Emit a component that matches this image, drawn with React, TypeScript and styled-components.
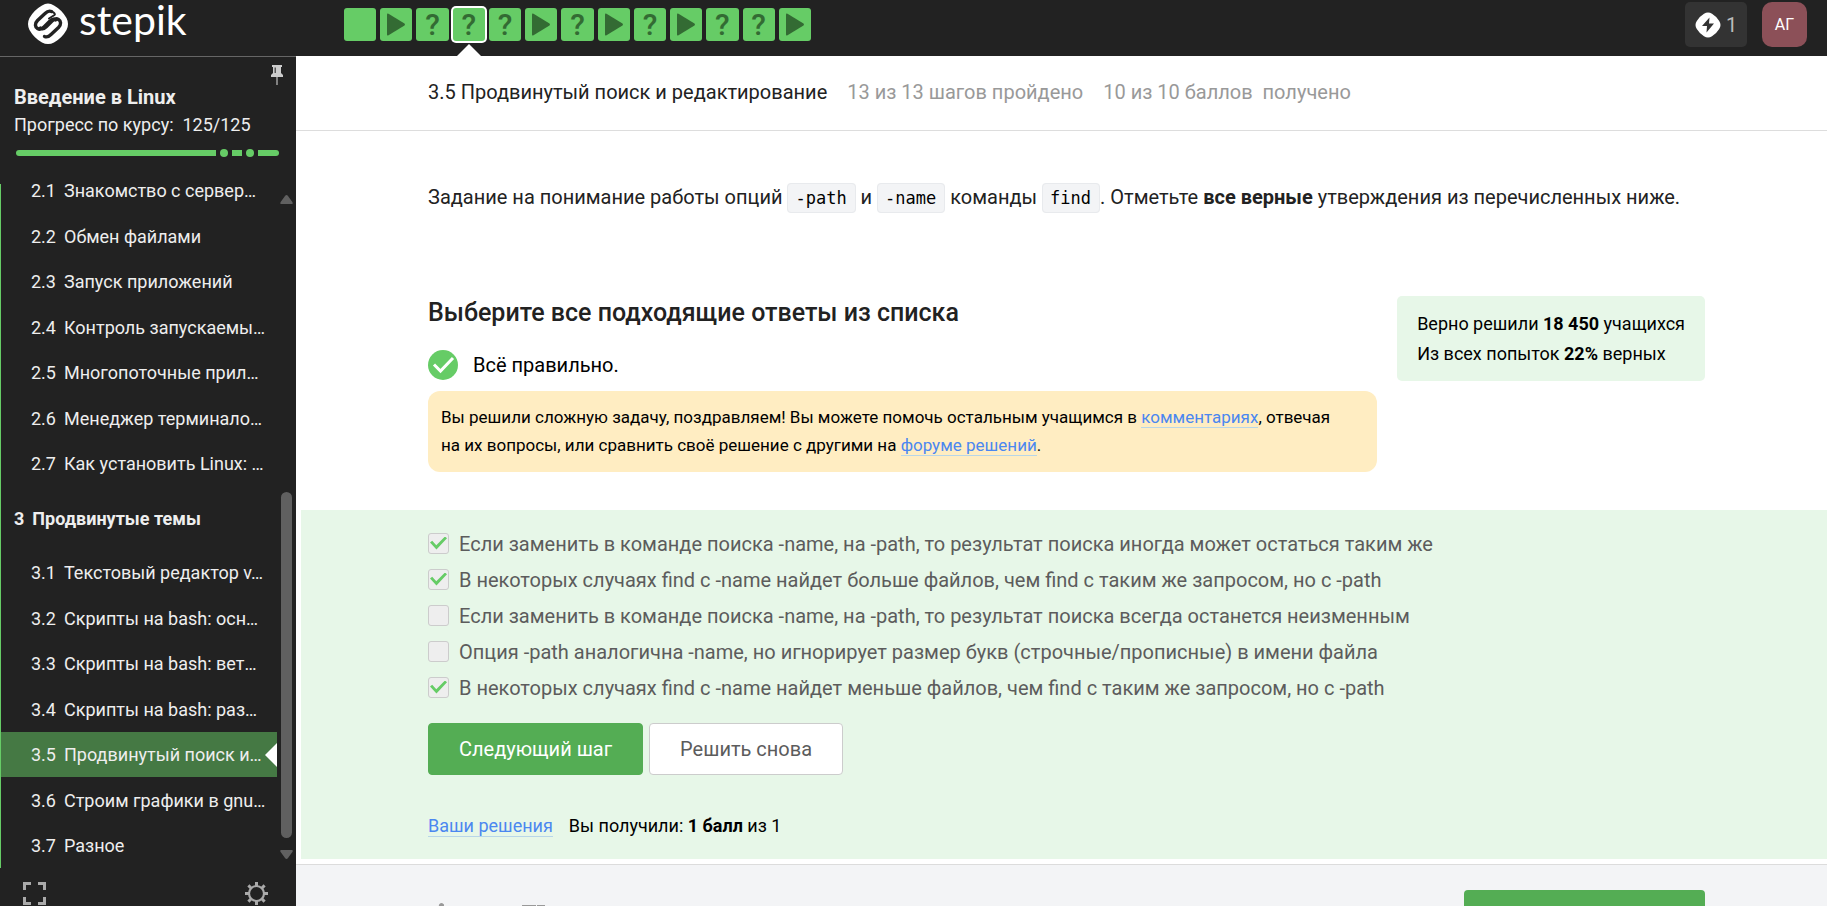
import React from "react";
import styled, { createGlobalStyle, css } from "styled-components";

const GlobalStyle = createGlobalStyle`
  *, *::before, *::after { box-sizing: border-box; }
  body { margin: 0; background: #fff; color: #222; font-family: Roboto, "Liberation Sans", sans-serif; }
  a { color: inherit; text-decoration: none; }
  button { font-family: inherit; cursor: pointer; }
  ul, ol { margin: 0; padding: 0; list-style: none; }
  h1, h2, h3, p { margin: 0; }
`;

const Page = styled.div`
  height: 100vh;
  overflow: hidden;
  display: flex;
  flex-direction: column;
`;

/* ---------- top bar ---------- */

const TopBar = styled.header`
  flex: none;
  height: 56px;
  display: flex;
  background: #222;
`;

const LogoArea = styled.div`
  width: 344px;
  flex: none;
  padding-left: 27px;
`;

const LogoLink = styled.a`
  display: inline-flex;
  align-items: flex-start;
  gap: 10px;
  color: #fff;
  svg { margin-top: 3px; }
`;

const Wordmark = styled.span`
  font-family: Lato, "Liberation Sans", sans-serif;
  font-size: 41px;
  line-height: 40px;
`;

const Steps = styled.nav`
  flex: none;
  width: 467px;
  height: 33px;
  margin-top: 8px;
  display: grid;
  grid-template-columns: repeat(13, 1fr);
  gap: 4px;
`;

const Step = styled.a<{ $active?: boolean }>`
  position: relative;
  display: flex;
  align-items: center;
  justify-content: center;
  border-radius: 3px;
  background: #66cc66;
  color: #336b33;
  font-size: 30px;
  line-height: 33px;
  font-weight: 500;
  ${(p) =>
    p.$active &&
    css`
      box-shadow: 0 0 0 2px #fff;
      &::after {
        content: "";
        position: absolute;
        top: 36px;
        left: 50%;
        margin-left: -12px;
        border: 12px solid transparent;
        border-top: 0;
        border-bottom-color: #fff;
      }
    `}
`;

const UserArea = styled.div`
  margin-left: auto;
  padding: 2px 20px 0 0;
  display: flex;
  align-items: flex-start;
  gap: 15px;
`;

const Streak = styled.button`
  height: 45px;
  width: 62px;
  padding: 0 10px;
  display: flex;
  align-items: center;
  gap: 5px;
  border: 0;
  border-radius: 5px;
  background: #333;
  color: #bbb;
  font-size: 20px;
  svg { flex: none; }
`;

const Avatar = styled.button`
  width: 45px;
  height: 45px;
  padding: 0;
  border: 0;
  border-radius: 10px;
  background: #8c5058;
  color: #fff;
  font-size: 16px;
`;

/* ---------- sidebar ---------- */

const Body = styled.div`
  flex: 1;
  min-height: 0;
  display: flex;
`;

const Sidebar = styled.aside`
  flex: none;
  width: 296px;
  display: flex;
  flex-direction: column;
  border-top: 1px solid #666;
  background: #222;
  color: #eee;
`;

const CourseHead = styled.div`
  flex: none;
  height: 127px;
  padding: 8px 13px 0 14px;
`;

const PinButton = styled.button`
  display: block;
  margin: 0 0 0 auto;
  padding: 0;
  width: 12px;
  height: 18px;
  border: 0;
  background: none;
`;

const CourseTitle = styled.h2`
  font-size: 20px;
  line-height: 28px;
  font-weight: 700;
`;

const CourseProgress = styled.p`
  font-size: 18px;
  line-height: 28px;
  white-space: pre;
`;

const ProgressTrack = styled.div`
  margin: 10px 4px 0 2px;
  height: 8px;
  display: flex;
  align-items: center;
  gap: 4px;
`;

const Segment = styled.span<{ $width?: number; $edge?: "left" | "right" }>`
  height: 6px;
  background: #66cc66;
  ${(p) => (p.$width ? `flex: none; width: ${p.$width}px;` : "flex: 1;")}
  ${(p) => p.$edge === "left" && "border-radius: 3px 0 0 3px;"}
  ${(p) => p.$edge === "right" && "border-radius: 0 3px 3px 0;"}
`;

const Exam = styled.span`
  flex: none;
  width: 8px;
  height: 8px;
  border-radius: 50%;
  background: #66cc66;
`;

const LessonArea = styled.div`
  flex: 1;
  min-height: 0;
  display: flex;
  gap: 3px;
`;

const LessonScroll = styled.nav`
  width: 277px;
  overflow: hidden;
  display: flex;
  flex-direction: column;
  justify-content: flex-end;
  border-left: 1px solid #66cc66;
`;

const LessonList = styled.ul`
  flex: none;
`;

const Lesson = styled.li<{ $active?: boolean }>`
  position: relative;
  height: 46px;
  &:nth-child(odd) { height: 45px; }
  a {
    height: 100%;
    padding-left: 30px;
    display: flex;
    align-items: center;
    gap: 8px;
    font-size: 18px;
    white-space: nowrap;
  }
  ${(p) =>
    p.$active &&
    css`
      background: #457944;
      &::after {
        content: "";
        position: absolute;
        right: 0;
        top: 11px;
        border: 12px solid transparent;
        border-left: 0;
        border-right-color: #fff;
      }
    `}
`;

const LessonNumber = styled.span`
  flex: none;
  width: 25px;
`;

const SectionTitle = styled.h3`
  flex: none;
  height: 64px;
  padding-left: 13px;
  display: flex;
  align-items: center;
  gap: 8px;
  font-size: 18px;
  font-weight: 700;
`;

const ScrollRail = styled.div`
  width: 13px;
  padding: 11px 0 9px;
  display: flex;
  flex-direction: column;
  align-items: center;
  svg { flex: none; display: block; }
`;

const ScrollThumb = styled.div`
  width: 11px;
  height: 346px;
  margin: auto 0 12px;
  border-radius: 6px;
  background: #606060;
`;

const SideFooter = styled.div`
  flex: none;
  height: 38px;
  padding: 14px 28px 0 23px;
  display: flex;
  justify-content: space-between;
`;

const IconButton = styled.button`
  width: 23px;
  height: 23px;
  padding: 0;
  border: 0;
  background: none;
  svg { display: block; }
`;

/* ---------- main column ---------- */

const Main = styled.main`
  flex: 1;
  min-width: 0;
  overflow: hidden;
`;

const LessonHeader = styled.div`
  height: 75px;
  padding: 0 122px 2px 132px;
  display: flex;
  align-items: center;
  gap: 20px;
  border-bottom: 1px solid #ddd;
  font-size: 20px;
  color: #999;
  white-space: pre;
`;

const LessonTitle = styled.h1`
  font-size: 20px;
  font-weight: 400;
  color: #222;
`;

const TaskText = styled.p`
  padding: 50px 122px 0 132px;
  font-size: 20px;
  line-height: 32px;
`;

const Code = styled.code`
  padding: 4px 8px 4px 7px;
  border: 1px solid #e8eaed;
  border-radius: 4px;
  background: #f3f4f6;
  color: #000;
  font-family: "DejaVu Sans Mono", monospace;
  font-size: 17px;
`;

const Quiz = styled.section`
  padding: 82px 122px 38px 132px;
  display: flex;
  align-items: flex-start;
  gap: 20px;
`;

const QuizMain = styled.div`
  flex: 1;
  min-width: 0;
`;

const QuizTitle = styled.h2`
  font-size: 25px;
  line-height: 34px;
  font-weight: 500;
`;

const Verdict = styled.div`
  padding: 20px 0 11px;
  display: flex;
  align-items: center;
  gap: 15px;
  color: #000;
  font-size: 20px;
  line-height: 30px;
`;

const Praise = styled.p`
  padding: 12px 30px 13px 13px;
  border-radius: 12px;
  background: #ffedc2;
  color: #000;
  font-size: 17px;
  line-height: 28px;
`;

const Link = styled.a`
  color: #4b87f0;
  border-bottom: 1px solid #b8d6e8;
`;

const Stats = styled.aside`
  flex: none;
  padding: 13px 20px 12px;
  border-radius: 5px;
  background: #e7f7e8;
  color: #000;
  font-size: 18px;
  line-height: 30px;
`;

const Answers = styled.form`
  margin: 0 0 5px 5px;
  padding: 16px 122px 22px 127px;
  background: #e7f7e8;
`;

const Choice = styled.label`
  display: flex;
  align-items: center;
  gap: 10px;
  height: 36px;
  color: #5c5c5c;
  font-size: 20px;
`;

const Tick = styled.input`
  appearance: none;
  flex: none;
  width: 21px;
  height: 21px;
  margin: 0 0 2px;
  border: 1px solid #ccc;
  border-radius: 3px;
  background: #eee;
  &:checked::before {
    content: "";
    display: block;
    width: 17px;
    height: 13px;
    margin: 3px 0 0 1px;
    background: #66cc66;
    clip-path: polygon(0 46%, 13% 33%, 37% 68%, 88% 0, 100% 14%, 38% 100%);
  }
`;

const Actions = styled.div`
  margin-top: 17px;
  display: flex;
  gap: 6px;
`;

const Button = styled.button<{ $primary?: boolean }>`
  height: 52px;
  padding: 0 30px;
  border: 1px solid ${(p) => (p.$primary ? "#54ad54" : "#ccc")};
  border-radius: 4px;
  background: ${(p) => (p.$primary ? "#54ad54" : "#fff")};
  color: ${(p) => (p.$primary ? "#fff" : "#5c5c5c")};
  font-size: 20px;
`;

const ResultLine = styled.div`
  margin-top: 40px;
  display: flex;
  gap: 16px;
  color: #000;
  font-size: 18px;
  line-height: 21px;
`;

const StepFooter = styled.footer`
  height: 100px;
  padding: 25px 122px 0 132px;
  display: flex;
  align-items: flex-start;
  border-top: 1px solid #dcdcdc;
  background: #f3f4f6;
`;

const Vote = styled.button`
  width: 30px;
  height: 30px;
  margin: 12px 62px 0 0;
  padding: 0;
  border: 0;
  background: none;
  svg { display: block; }
`;

const FooterNext = styled.button`
  width: 241px;
  height: 52px;
  margin-left: auto;
  border: 0;
  border-radius: 4px;
  background: #54ad54;
`;

/* ---------- data ---------- */

const steps = ["text", "video", "quiz", "quiz", "quiz", "video", "quiz", "video", "quiz", "video", "quiz", "quiz", "video"];
const ACTIVE_STEP = 3;

const sectionTwo = [
  ["2.1", "Знакомство с сервер…"],
  ["2.2", "Обмен файлами"],
  ["2.3", "Запуск приложений"],
  ["2.4", "Контроль запускаемы…"],
  ["2.5", "Многопоточные прил…"],
  ["2.6", "Менеджер терминало…"],
  ["2.7", "Как установить Linux: …"],
];

const sectionThree = [
  ["3.1", "Текстовый редактор v…"],
  ["3.2", "Скрипты на bash: осн…"],
  ["3.3", "Скрипты на bash: вет…"],
  ["3.4", "Скрипты на bash: раз…"],
  ["3.5", "Продвинутый поиск и…"],
  ["3.6", "Строим графики в gnu…"],
  ["3.7", "Разное"],
];

const choices = [
  { text: "Если заменить в команде поиска -name, на -path, то результат поиска иногда может остаться таким же", on: true },
  { text: "В некоторых случаях find с -name найдет больше файлов, чем find с таким же запросом, но с -path", on: true },
  { text: "Если заменить в команде поиска -name, на -path, то результат поиска всегда останется неизменным", on: false },
  { text: "Опция -path аналогична -name, но игнорирует размер букв (строчные/прописные) в имени файла", on: false },
  { text: "В некоторых случаях find с -name найдет меньше файлов, чем find с таким же запросом, но с -path", on: true },
];

/* ---------- drawings ---------- */

const LogoMark = () => (
  <svg width="42" height="42" viewBox="0 0 42 42" aria-hidden="true">
    <path d="M15 2.5Q21-1.5 27 2.5Q35 7 39.500 15Q42.500 21 39.500 27Q35 35 27 39.500Q21 42.500 15 39.500Q7 35 2.500 27Q-.5 21 2.500 15Q7 7 15 2.500Z" fill="#fff" />
    <g fill="none" stroke="#222" strokeWidth="3.400" strokeLinecap="round" strokeLinejoin="round">
      <path d="M24.500 8.500C22 7.500 20 8.500 18 10.500L10.500 17.500C7.500 20.500 8 24 10.500 25.500C13 27 15 26 17 24L22.500 18.500C24.500 16.500 26.500 15.500 28.500 17" />
      <path d="M17.500 33.500C20 34.500 22 33.500 24 31.500L31.500 24.500C34.500 21.500 34 18 31.500 16.500C29 15 27 16 25 18L19.500 23.500C17.500 25.500 15.500 26.500 13.500 25" />
      <path d="M24.500 8.500Q29 10.500 27.500 12L22 15.500" strokeWidth="2" />
    </g>
  </svg>
);

const Play = () => (
  <svg width="20" height="23" viewBox="0 0 20 23" aria-hidden="true">
    <path d="M1 1.500Q1 0 2.500 .8L18.500 10.500Q19.500 11.500 18.500 12.500L2.500 22.200Q1 23 1 21.500Z" fill="#336b33" />
  </svg>
);

const Bolt = () => (
  <svg width="26" height="26" viewBox="0 0 26 26" aria-hidden="true">
    <path d="M9 1.800Q13-.8 17 1.800Q21.500 4.500 24.200 9Q26.800 13 24.200 17Q21.500 21.500 17 24.200Q13 26.800 9 24.200Q4.500 21.500 1.800 17Q-.8 13 1.800 9Q4.500 4.500 9 1.800Z" fill="#fff" />
    <path d="M14.500 5.500L7 14H12L11.500 20.500L19 11.500H14Z" fill="#333" />
  </svg>
);

const Pin = () => (
  <svg width="12" height="20" viewBox="0 0 12 20" aria-hidden="true" overflow="visible">
    <path d="M1 0H11V2H10V8L12 10V12H0V10L2 8V2H1Z" fill="#ccc" />
    <path d="M3.500 2.500H5V8H3.500Z" fill="#555" />
    <path d="M5.300 12H6.700V20H5.300Z" fill="#aaa" />
  </svg>
);

const Gear = () => (
  <svg width="23" height="23" viewBox="0 0 23 23" aria-hidden="true" stroke="#aaa" fill="none">
    <circle cx="11.500" cy="11.500" r="7.500" strokeWidth="2.200" />
    <path d="M11.500 0V4M11.500 19V23M0 11.500H4M19 11.500H23M3.400 3.400L6.200 6.200M16.800 16.800L19.600 19.600M3.400 19.600L6.200 16.800M16.800 6.200L19.600 3.400" strokeWidth="3" />
  </svg>
);

const Fullscreen = () => (
  <svg width="23" height="23" viewBox="0 0 23 23" aria-hidden="true">
    <path d="M1.500 8V1.500H8M15 1.500H21.500V8M21.500 15V21.500H15M8 21.500H1.500V15" fill="none" stroke="#aaa" strokeWidth="3" />
  </svg>
);

const Approved = () => (
  <svg width="30" height="30" viewBox="0 0 30 30" aria-hidden="true">
    <circle cx="15" cy="15" r="15" fill="#66cc66" />
    <path d="M6 14.500L12.500 21L25 8" fill="none" stroke="#fff" strokeWidth="3" />
  </svg>
);

const RailArrow = ({ down }: { down?: boolean }) => (
  <svg width="13" height="9" viewBox="0 0 13 9" aria-hidden="true">
    <path d={down ? "M1 0H12Q13.500 .5 12 2.500L8 8Q6.500 10 5 8L1 2.500Q-.5 .5 1 0Z" : "M1 9H12Q13.500 8.500 12 6.500L8 1Q6.500-1 5 1L1 6.500Q-.5 8.500 1 9Z"} fill="#606060" />
  </svg>
);

const Thumb = ({ down }: { down?: boolean }) => (
  <svg width="30" height="30" viewBox="0 0 30 30" aria-hidden="true" fill={down ? "none" : "#999"} stroke="#999" strokeWidth="2">
    {down ? <path d="M3 4H15V20L9 28V20H1ZM18 4H24V18H18Z" /> : <path d="M12 3Q13 1 15 3V12H26L24 26H10V12Z" />}
  </svg>
);

const Lessons = ({ items }: { items: string[][] }) => (
  <LessonList>
    {items.map(([number, title]) => (
      <Lesson key={number} $active={number === "3.5"}>
        <a href="#lesson">
          <LessonNumber>{number}</LessonNumber>
          <span>{title}</span>
        </a>
      </Lesson>
    ))}
  </LessonList>
);

export default function App() {
  return (
    <Page>
      <GlobalStyle />
      <TopBar>
        <LogoArea>
          <LogoLink href="#home">
            <LogoMark />
            <Wordmark>stepik</Wordmark>
          </LogoLink>
        </LogoArea>
        <Steps aria-label="Шаги">
          {steps.map((kind, i) => (
            <Step key={i} href="#step" aria-label={`Шаг ${i + 1}`} $active={i === ACTIVE_STEP}>
              {kind === "video" && <Play />}
              {kind === "quiz" && "?"}
            </Step>
          ))}
        </Steps>
        <UserArea>
          <Streak>
            <Bolt />
            <span>1</span>
          </Streak>
          <Avatar>АГ</Avatar>
        </UserArea>
      </TopBar>

      <Body>
        <Sidebar>
          <CourseHead>
            <PinButton aria-label="Закрепить"><Pin /></PinButton>
            <CourseTitle><a href="#course">Введение в Linux</a></CourseTitle>
            <CourseProgress>{"Прогресс по курсу:  125/125"}</CourseProgress>
            <ProgressTrack>
              <Segment $edge="left" />
              <Exam />
              <Segment $width={10} />
              <Exam />
              <Segment $width={21} $edge="right" />
            </ProgressTrack>
          </CourseHead>
          <LessonArea>
            <LessonScroll aria-label="Уроки">
              <Lessons items={sectionTwo} />
              <SectionTitle><span>3</span><span>Продвинутые темы</span></SectionTitle>
              <Lessons items={sectionThree} />
            </LessonScroll>
            <ScrollRail>
              <RailArrow />
              <ScrollThumb />
              <RailArrow down />
            </ScrollRail>
          </LessonArea>
          <SideFooter>
            <IconButton aria-label="Во весь экран"><Fullscreen /></IconButton>
            <IconButton aria-label="Настройки"><Gear /></IconButton>
          </SideFooter>
        </Sidebar>

        <Main>
          <LessonHeader>
            <LessonTitle>3.5 Продвинутый поиск и редактирование</LessonTitle>
            <span>13 из 13 шагов пройдено</span>
            <span>{"10 из 10 баллов  получено"}</span>
          </LessonHeader>
          <TaskText>
            Задание на понимание работы опций <Code>-path</Code> и <Code>-name</Code> команды <Code>find</Code>. Отметьте{" "}
            <b>все верные</b> утверждения из перечисленных ниже.
          </TaskText>

          <Quiz>
            <QuizMain>
              <QuizTitle>Выберите все подходящие ответы из списка</QuizTitle>
              <Verdict><Approved />Всё правильно.</Verdict>
              <Praise>
                Вы решили сложную задачу, поздравляем! Вы можете помочь остальным учащимся в{" "}
                <Link href="#comments">комментариях</Link>, отвечая на их вопросы, или сравнить своё решение с другими на{" "}
                <Link href="#solutions">форуме решений</Link>.
              </Praise>
            </QuizMain>
            <Stats>
              <p>Верно решили <b>18 450</b> учащихся</p>
              <p>Из всех попыток <b>22%</b> верных</p>
            </Stats>
          </Quiz>

          <Answers onSubmit={(e) => e.preventDefault()}>
            {choices.map((c) => (
              <Choice key={c.text}>
                <Tick type="checkbox" defaultChecked={c.on} disabled />
                {c.text}
              </Choice>
            ))}
            <Actions>
              <Button type="button" $primary>Следующий шаг</Button>
              <Button type="button">Решить снова</Button>
            </Actions>
            <ResultLine>
              <Link href="#my-solutions">Ваши решения</Link>
              <span>Вы получили: <b>1 балл</b> из 1</span>
            </ResultLine>
          </Answers>

          <StepFooter>
            <Vote aria-label="Нравится"><Thumb /></Vote>
            <Vote aria-label="Не нравится"><Thumb down /></Vote>
            <FooterNext aria-label="Следующий шаг" />
          </StepFooter>
        </Main>
      </Body>
    </Page>
  );
}
